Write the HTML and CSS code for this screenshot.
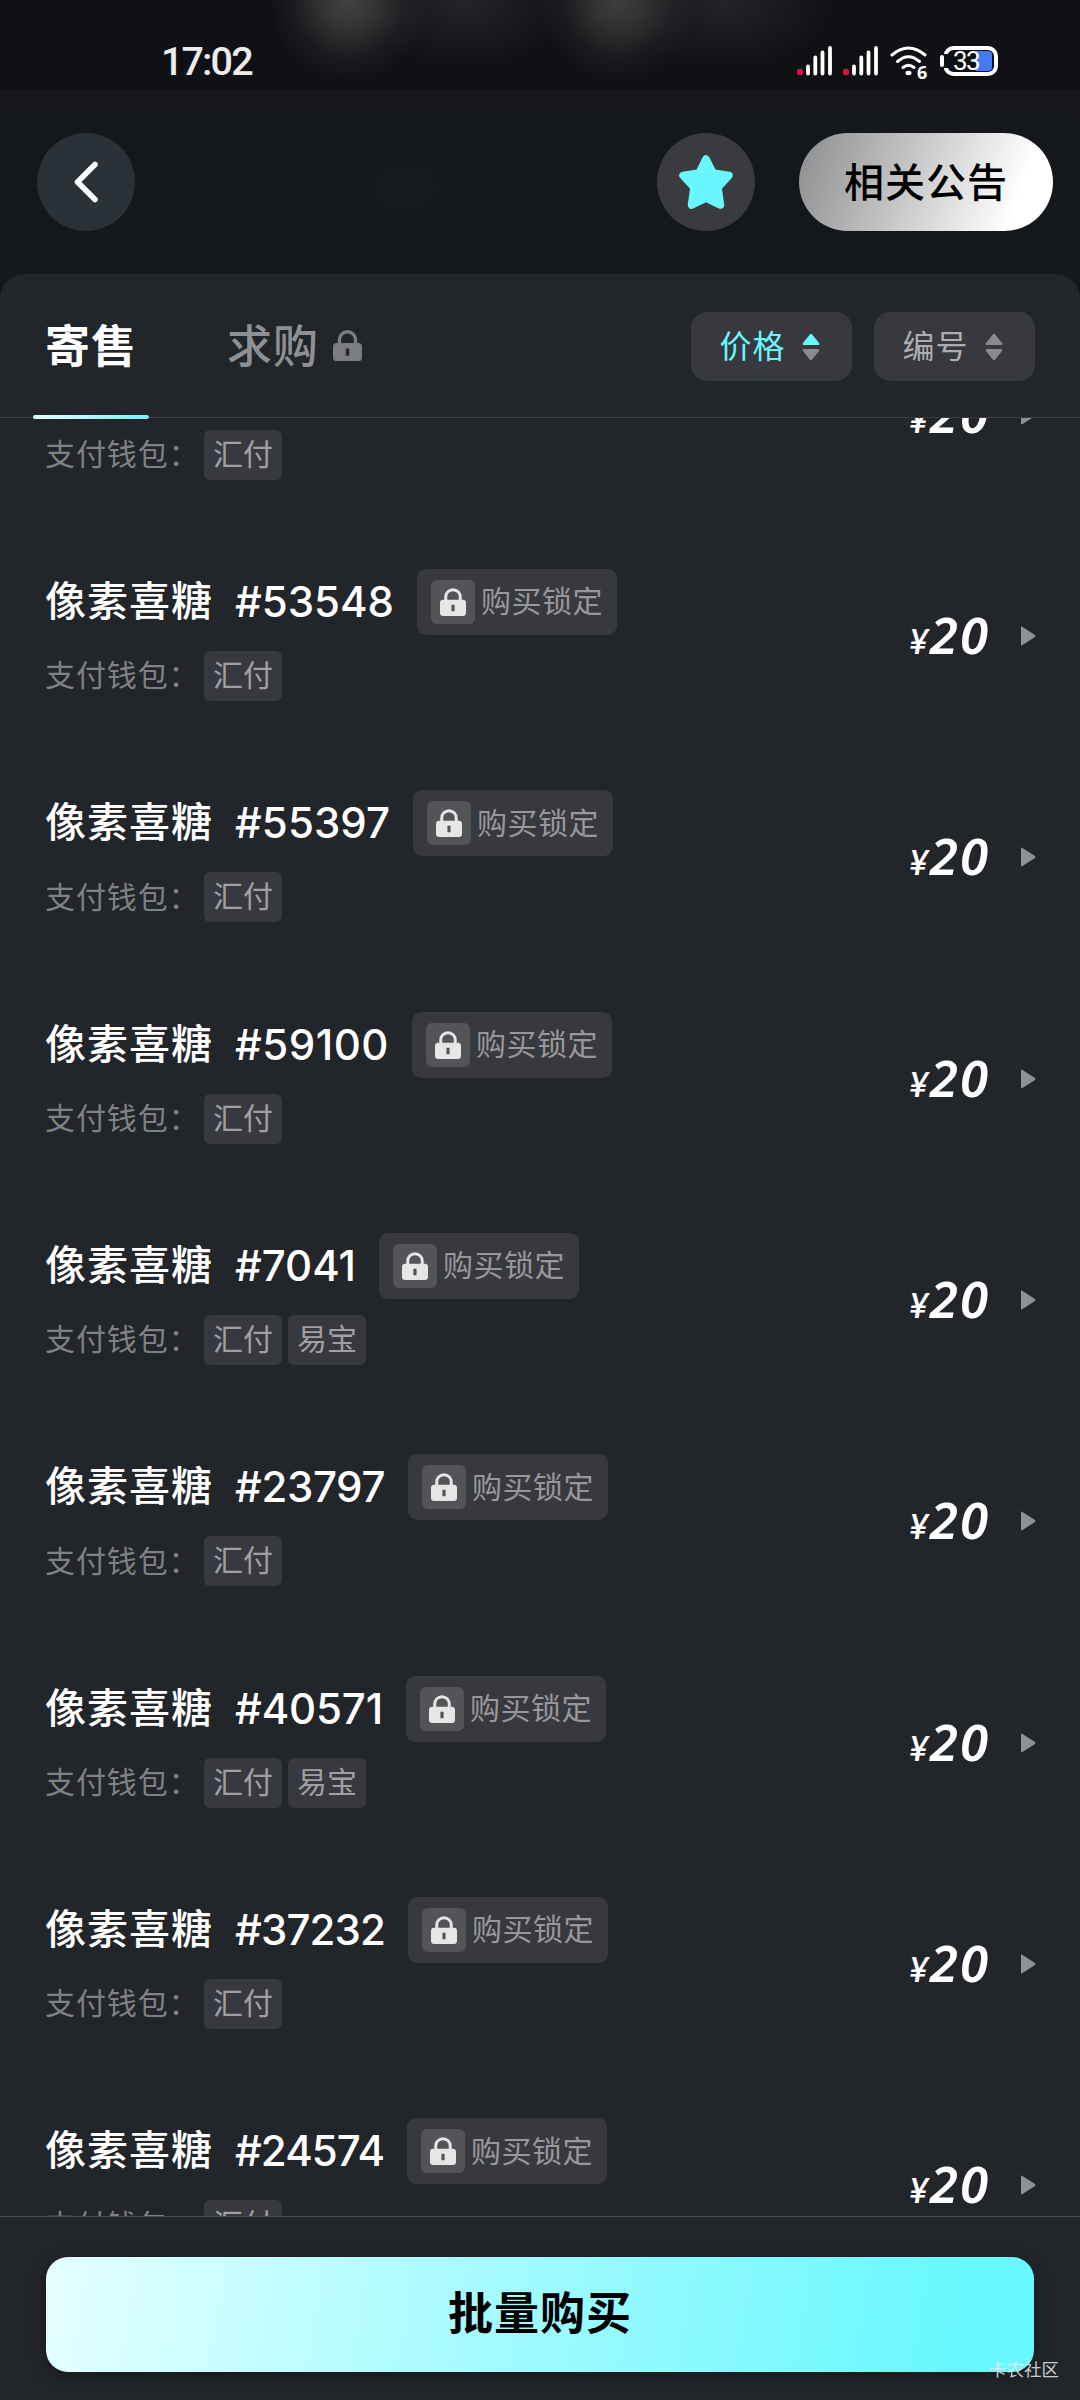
FILE: index.html
```
<!DOCTYPE html>
<html lang="zh-CN">
<head>
    <meta charset="UTF-8">
    <title>像素喜糖</title>
    <link rel="stylesheet" href="styles.css">
</head>
<body>
    <!-- shared icons -->
    <svg class="defs" width="0" height="0">
        <symbol id="lock" viewBox="0 0 28 30">
            <path d="M6.200 15V9.500a7.800 7.800 0 0 1 15.600 0V15" fill="none" stroke="currentColor" stroke-width="3.200"/>
            <path fill-rule="evenodd" fill="currentColor" d="M3.500 12.500h21a3.500 3.500 0 0 1 3.500 3.500v10.500a3.500 3.500 0 0 1-3.500 3.500h-21a3.500 3.500 0 0 1-3.500-3.500v-10.500a3.500 3.500 0 0 1 3.500-3.500zM12.300 18v7h3.400v-7z"/>
        </symbol>
        <symbol id="sort" viewBox="0 0 18 28">
            <path class="up" d="M7.800 1.500Q9 0 10.200 1.500L17 10Q18 12 16 12H2Q0 12 1 10Z"/>
            <path class="down" d="M7.800 26.500Q9 28 10.200 26.500L17 18Q18 16 16 16H2Q0 16 1 18Z"/>
        </symbol>
        <symbol id="signal" viewBox="0 0 38 30">
            <circle cx="4" cy="26" r="3.200" fill="#d3163c"/>
            <path d="M12 20.500v7M19.300 11.500v16M26.500 6.500v21M34 2v25.500" stroke="#fff" stroke-width="3.800" stroke-linecap="round"/>
        </symbol>
    </svg>

    <div class="status-bar">
        <span class="time">17:02</span>
        <div class="status-icons">
            <svg width="38" height="30"><use href="#signal"/></svg>
            <svg width="38" height="30"><use href="#signal"/></svg>
            <svg class="wifi" width="38" height="36" viewBox="0 0 38 36">
                <g fill="none" stroke="#fff" stroke-width="3" stroke-linecap="round">
                    <path d="M2 9Q18.500 -5 35 9"/>
                    <path d="M7.500 15.500Q18.500 6 29.500 15.500"/>
                    <path d="M13 21.500Q18.500 17 24 21.500"/>
                </g>
                <ellipse cx="18.500" cy="27" rx="3" ry="2.200" fill="#fff"/>
                <text x="27" y="33" class="wifi-gen">6</text>
            </svg>
            <svg width="58" height="30" viewBox="0 0 58 30">
                <rect x="5.500" y="2" width="50.500" height="26" rx="8" fill="#101115" stroke="#fff" stroke-width="4"/>
                <path d="M36 5h12a4 4 0 0 1 4 4v12a4 4 0 0 1-4 4H36z" fill="#447afa"/>
                <path d="M5 8v14" stroke="#101115" stroke-width="6"/>
                <path d="M2 11v8" stroke="#fff" stroke-width="4" stroke-linecap="round"/>
                <text x="13" y="24" class="battery-level">33</text>
            </svg>
        </div>
    </div>

    <div class="header">
        <div class="round-btn back">
            <svg width="30" height="46" viewBox="0 0 30 46"><path d="M24 5.500L6.500 23L24 40.500" fill="none" stroke="#fff" stroke-width="5.500" stroke-linecap="round" stroke-linejoin="round"/></svg>
        </div>
        <div class="round-btn star">
            <svg width="56" height="56" viewBox="0 0 56 56"><path d="M28 5L35 19L51 21.500L40 33.500L42.500 51L28 44L13.500 51L16 33.500L5 21.500L21 19Z" fill="#68f7ff" stroke="#68f7ff" stroke-width="7.500" stroke-linejoin="round"/></svg>
        </div>
        <div class="notice-btn">相关公告</div>
    </div>

    <div class="panel">
        <div class="tabs">
            <div class="tab active">寄售</div>
            <div class="tab">求购<svg class="tab-lock" width="29" height="31"><use href="#lock"/></svg></div>
            <div class="filters">
                <div class="filter on">价格<svg width="18" height="28"><use href="#sort"/></svg></div>
                <div class="filter">编号<svg width="18" height="28"><use href="#sort"/></svg></div>
            </div>
        </div>

        <div class="list" id="list"></div>

        <div class="footer">
            <div class="buy-btn">批量购买</div>
        </div>
    </div>
    <div class="watermark">卡农社区</div>

    <script>
        const items = [
            { no: '59264', width: 154, wallets: ['汇付'] },
            { no: '53548', width: 159, wallets: ['汇付'] },
            { no: '55397', width: 155, wallets: ['汇付'] },
            { no: '59100', width: 154, wallets: ['汇付'] },
            { no: '7041', width: 121, wallets: ['汇付', '易宝'] },
            { no: '23797', width: 150, wallets: ['汇付'] },
            { no: '40571', width: 148, wallets: ['汇付', '易宝'] },
            { no: '37232', width: 150, wallets: ['汇付'] },
            { no: '24574', width: 149, wallets: ['汇付'] }
        ];

        document.getElementById('list').innerHTML = items.map(item => `
            <div class="item">
                <div class="info">
                    <div class="title">
                        <span class="name">像素喜糖</span>
                        <span class="no">#${item.no}</span>
                        <span class="badge">
                            <span class="badge-icon"><svg width="26" height="28"><use href="#lock"/></svg></span><span class="badge-text">购买锁定</span>
                        </span>
                    </div>
                    <div class="wallets">
                        <span class="label">支付钱包：</span>
                        ${item.wallets.map(w => `<span class="tag">${w}</span>`).join('')}
                    </div>
                </div>
                <div class="price"><span class="yen">¥</span>20</div>
                <svg class="arrow" width="15" height="20" viewBox="0 0 15 20"><path d="M0 1.500Q0 0 1.500 1L14 9Q15 10 14 11L1.500 19Q0 20 0 18.500Z"/></svg>
            </div>
        `).join('');

        // spread the digits over the width of each number
        document.querySelectorAll('.no').forEach((el, i) => {
            const gap = items[i].width - el.getBoundingClientRect().width;
            el.style.letterSpacing = `${gap / el.textContent.length}px`;
        });
    </script>
</body>
</html>
```
FILE: styles.css
```
* {
    box-sizing: border-box;
}

body {
    margin: 0;
    width: 1080px;
    height: 2400px;
    display: flex;
    flex-direction: column;
    position: relative;
    overflow: hidden;
    background: #14171b;
    color: #fff;
    font-family: Inter, "Noto Sans CJK SC", sans-serif;
    white-space: nowrap;
}

.defs {
    position: absolute;
}

.status-bar {
    height: 90px;
    flex: none;
    display: flex;
    justify-content: space-between;
    padding: 0 82px 0 161px;
    background:
        radial-gradient(ellipse 80px 84px at 348px 0, #424242, rgba(66, 66, 66, 0.75) 30%, rgba(66, 66, 66, 0.2) 70%, rgba(66, 66, 66, 0)),
        radial-gradient(ellipse 80px 84px at 618px 0, #3e3e3e, rgba(62, 62, 62, 0.75) 30%, rgba(62, 62, 62, 0.2) 70%, rgba(62, 62, 62, 0)),
        radial-gradient(ellipse 110px 70px at 465px 0, #232428, rgba(35, 36, 40, 0)),
        radial-gradient(ellipse 110px 70px at 725px 0, #232428, rgba(35, 36, 40, 0)),
        #101115;
}

.time {
    font-family: Roboto, sans-serif;
    font-size: 39.5px;
    font-weight: 500;
    line-height: 40px;
    margin-top: 42px;
    letter-spacing: -1.9px;
    color: #ececec;
}

.status-icons {
    display: flex;
    margin-top: 46px;
    gap: 8px;
}

.wifi {
    margin: 0 4px 0 2px;
}

.wifi-gen {
    font: 700 18px "Noto Sans", sans-serif;
    fill: #fff;
}

.battery-level {
    font: 400 26px Roboto, sans-serif;
    letter-spacing: -1.5px;
    fill: #fff;
}

.header {
    height: 184px;
    flex: none;
    display: flex;
    align-items: center;
    padding: 0 27px 0 37px;
    background:
        radial-gradient(ellipse 60px 45px at 405px 98px, #181b1f, rgba(24, 27, 31, 0)),
        linear-gradient(#16181c, #14171b 40%);
}

.round-btn {
    width: 98px;
    height: 98px;
    border-radius: 50%;
    display: flex;
    align-items: center;
    justify-content: center;
}

.back {
    background: #2a3238;
    margin-right: auto;
}

.star {
    background: #3a3b3f;
    margin-right: 44px;
}

.notice-btn {
    width: 254px;
    height: 98px;
    border-radius: 49px;
    background: linear-gradient(110deg, #929395 5%, #fff 84%);
    color: #000;
    font-size: 40px;
    font-weight: 500;
    line-height: 99px;
    letter-spacing: 1px;
    text-align: center;
}

.panel {
    flex: 1;
    min-height: 0;
    display: flex;
    flex-direction: column;
    border-radius: 24px 24px 0 0;
    background: #222529;
}

.tabs {
    height: 144px;
    flex: none;
    display: flex;
    align-items: center;
    padding: 0 45px 0 34px;
    border-bottom: 1px solid #3b3c40;
    position: relative;
}

.tab {
    display: flex;
    align-items: center;
    font-size: 45px;
    line-height: 66px;
    letter-spacing: 1px;
    color: #8f9094;
    font-weight: 500;
    margin: 2px 0 0 78px;
}

.tab.active {
    width: 115px;
    margin: 2px 0 0;
    padding-left: 11px;
    color: #fff;
    font-weight: 700;
}

.tab.active::after {
    content: "";
    position: absolute;
    left: 33px;
    bottom: -2px;
    width: 116px;
    height: 4px;
    border-radius: 2px;
    background: linear-gradient(90deg, #e5ffff, #7cecf5);
}

.tab-lock {
    margin: -3px 0 0 14px;
    color: #7c7d81;
}

.filters {
    display: flex;
    gap: 22px;
    margin-left: auto;
    padding-top: 1px;
}

.filter {
    width: 161px;
    height: 69px;
    border-radius: 16px;
    background: #38393e;
    color: #aeaeb2;
    font-size: 32px;
    line-height: 40px;
    letter-spacing: 1px;
    display: flex;
    align-items: center;
    justify-content: center;
    gap: 16px;
    padding: 1px 4px 0 0;
    fill: #8a8b8f;
}

.filter.on {
    color: #68f7ff;
    --up: #68f7ff;
}

/* the up arrow takes the colour of the active filter */
.up {
    fill: var(--up, #8a8b8f);
}

.list {
    flex: 1;
    min-height: 0;
    overflow: hidden;
}

.item {
    height: 221.33px;
    display: flex;
    align-items: center;
    padding: 0 44px 0 45px;
}

.item:first-child {
    margin-top: -115px;
}

.info {
    flex: 1;
}

.title {
    display: flex;
    align-items: center;
    height: 66px;
}

.name {
    width: 190px;
    font-size: 41px;
    line-height: 50px;
    letter-spacing: 1px;
    font-weight: 500;
    padding-bottom: 2px;
}

.no {
    width: auto;
    font-size: 42px;
    line-height: 50px;
    font-weight: 500;
}

.badge {
    width: 200px;
    height: 66px;
    margin-left: 23px;
    padding-left: 14px;
    border-radius: 9px;
    background: #38393e;
    color: #98989c;
    font-size: 30px;
    line-height: 40px;
    letter-spacing: 0.5px;
    display: flex;
    align-items: center;
}

.badge-icon {
    width: 44px;
    height: 44px;
    margin-right: 6px;
    border-radius: 6px;
    background: #535458;
    color: #e6e6e7;
    display: flex;
    align-items: center;
    justify-content: center;
}

.badge-text {
    padding-bottom: 1px;
}

.wallets {
    display: flex;
    align-items: center;
    height: 50px;
    margin-top: 16px;
    font-size: 30px;
    color: #808185;
}

.label {
    width: 159px;
    line-height: 40px;
    letter-spacing: 0.9px;
    padding-bottom: 1px;
}

.tag {
    width: 78px;
    height: 50px;
    margin-right: 6px;
    border-radius: 6px;
    background: #38393e;
    color: #a0a0a4;
    line-height: 49px;
    text-align: center;
}

.price {
    font-family: "Noto Sans", sans-serif;
    font-style: italic;
    font-weight: 600;
    font-size: 51px;
    line-height: 60px;
    padding-top: 6px;
    letter-spacing: 2px;
}

.yen {
    font-family: Inter, sans-serif;
    font-size: 34px;
    font-weight: 500;
}

.arrow {
    margin: 2px 0 0 31px;
    fill: #909195;
}

.footer {
    height: 184px;
    flex: none;
    border-top: 1px solid #4a4b4f;
    padding: 40px 46px 0;
}

.buy-btn {
    height: 115px;
    border-radius: 22px;
    background: linear-gradient(100deg, #e6ffff, #aafbff 40%, #68f8ff 92%);
    box-shadow: 0 4px 16px rgba(0, 0, 0, 0.35);
    color: #000;
    font-size: 45px;
    font-weight: 700;
    letter-spacing: 1px;
    line-height: 114px;
    text-align: center;
}

.watermark {
    position: absolute;
    left: 989px;
    top: 2357px;
    font-size: 17.5px;
    line-height: 26px;
    color: rgba(235, 235, 235, 0.85);
}
```
